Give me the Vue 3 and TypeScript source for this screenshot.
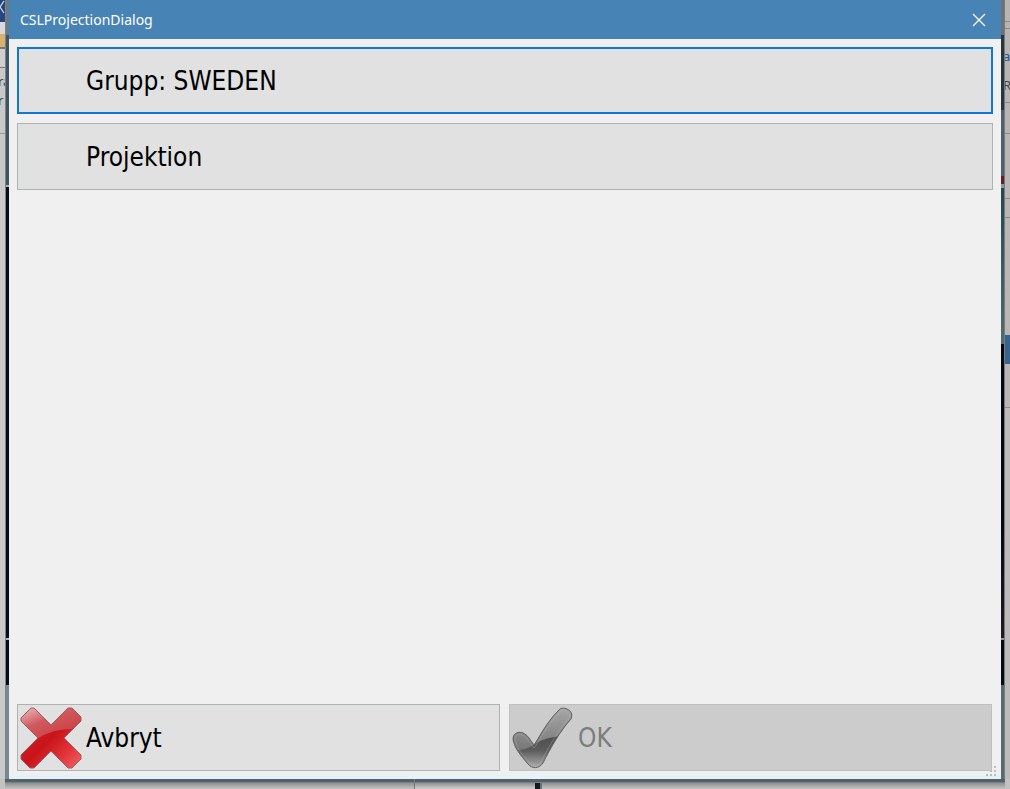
<script setup lang="ts">
import { ref } from 'vue'

const title = 'CSLProjectionDialog'
const group = ref('SWEDEN')
const canConfirm = ref(false)
</script>

<template>
  <div class="desktop">
    <div class="side left" aria-hidden="true">
      <div class="outer">
        <svg class="chevron" viewBox="0 0 5 14"><path d="M4 1 L0 7 L4 13" fill="none" stroke="#dfe6f2" stroke-width="1.2" /></svg>
        <span class="scrap first">ra</span>
        <span class="scrap second">r</span>
      </div>
      <div class="inner"></div>
    </div>

    <main class="dialog" role="dialog" :aria-label="title">
      <header class="titlebar">
        <h1>{{ title }}</h1>
        <button class="close" type="button" aria-label="Stäng">
          <svg viewBox="0 0 14 14"><path d="M1 1 L13 13 M13 1 L1 13" stroke="#fff" stroke-width="1.2" fill="none" /></svg>
        </button>
      </header>

      <div class="content">
        <button class="btn focused" type="button"><span class="slot"></span><span>Grupp: {{ group }}</span></button>
        <button class="btn" type="button"><span class="slot"></span><span>Projektion</span></button>
        <div class="spacer"></div>
        <footer class="actions">
          <button class="btn" type="button">
            <span class="slot">
              <svg class="icon" viewBox="0 0 62 62">
                <defs>
                  <linearGradient id="redBase" x1="0" y1="0" x2="1" y2="1">
                    <stop offset="0" stop-color="#d92a30" />
                    <stop offset="0.5" stop-color="#c8141a" />
                    <stop offset="0.75" stop-color="#e2353a" />
                    <stop offset="1" stop-color="#f0696c" />
                  </linearGradient>
                  <linearGradient id="redGloss" x1="0" y1="0" x2="0.6" y2="1">
                    <stop offset="0" stop-color="#ecc4c5" />
                    <stop offset="0.4" stop-color="#d0595d" />
                    <stop offset="1" stop-color="#c4343a" />
                  </linearGradient>
                  <clipPath id="crossClip">
                    <path d="M11 1 H14 L31 18 L48 1 H52 L61 10 V14 L44 31 L61 48 V52 L52 61 H48 L31 44 L14 61 H10 L1 52 V48 L18 31 L1 14 V11 Z" />
                  </clipPath>
                </defs>
                <g clip-path="url(#crossClip)">
                  <rect width="62" height="62" fill="url(#redBase)" />
                  <path d="M0 0 H62 V22 Q34 20 17 32 L0 44 Z" fill="url(#redGloss)" />
                </g>
                <path d="M11 1 H14 L31 18 L48 1 H52 L61 10 V14 L44 31 L61 48 V52 L52 61 H48 L31 44 L14 61 H10 L1 52 V48 L18 31 L1 14 V11 Z" fill="none" stroke="#a8585b" stroke-width="1" stroke-linejoin="round" />
              </svg>
            </span>
            <span>Avbryt</span>
          </button>
          <button class="btn" type="button" :disabled="!canConfirm">
            <span class="slot">
              <svg class="icon" viewBox="0 0 62 62">
                <defs>
                  <linearGradient id="greyBase" x1="0" y1="0" x2="0" y2="1">
                    <stop offset="0.45" stop-color="#4c4c4c" />
                    <stop offset="0.7" stop-color="#5c5c5c" />
                    <stop offset="1" stop-color="#b4b4b4" />
                  </linearGradient>
                  <linearGradient id="greyGloss" x1="0" y1="0" x2="0" y2="1">
                    <stop offset="0" stop-color="#a8a8a8" />
                    <stop offset="1" stop-color="#777" />
                  </linearGradient>
                  <clipPath id="tickClip">
                    <path d="M1 32 C1 26 7 24 11 26 C16 28 18 33 22 38 C27 31 34 16 46 4 C49 0 52 1 55 2 C59 4 61 7 59 12 C48 24 38 42 31 56 C27 62 20 62 16 57 C8 48 2 40 1 32 Z" />
                  </clipPath>
                </defs>
                <g clip-path="url(#tickClip)">
                  <rect width="62" height="62" fill="url(#greyBase)" />
                  <path d="M0 0 H62 V30 Q38 27 23 37 Q14 43 5 43 L0 43 Z" fill="url(#greyGloss)" />
                </g>
                <path d="M1 32 C1 26 7 24 11 26 C16 28 18 33 22 38 C27 31 34 16 46 4 C49 0 52 1 55 2 C59 4 61 7 59 12 C48 24 38 42 31 56 C27 62 20 62 16 57 C8 48 2 40 1 32 Z" fill="none" stroke="#626262" stroke-width="1" />
                <path d="M3 32 C3 28 7 26 10 28 C15 30 17 35 22 41 C28 34 35 18 47 6 C49 3 52 3 54 4 C58 6 58 8 57 11 C46 23 36 41 29 55 C26 60 21 60 18 56 C9 47 4 40 3 32 Z" fill="none" stroke="#b5b5b5" stroke-width="1" opacity="0.4" />
              </svg>
            </span>
            <span>OK</span>
          </button>
        </footer>
      </div>
      <svg class="grip" viewBox="0 0 11 11" aria-hidden="true">
        <path d="M8 0h2v2h-2z M8 4h2v2h-2z M4 4h2v2h-2z M8 8h2v2h-2z M4 8h2v2h-2z M0 8h2v2h-2z" fill="#bdbdbd" />
      </svg>
    </main>

    <div class="side right" aria-hidden="true">
      <div class="inner"></div>
      <div class="outer">
        <span class="scrap link">a</span>
        <span class="scrap letter">R</span>
      </div>
    </div>

    <div class="under" aria-hidden="true"><span class="seam"></span><span class="pane"></span><span class="bar"></span></div>
  </div>
</template>

<style>
body {
  margin: 0;
}
</style>

<style scoped>
* {
  box-sizing: border-box;
}

.desktop {
  display: grid;
  grid-template-columns: 9px minmax(0, 1fr) 9px;
  grid-template-rows: minmax(0, 1fr) 10px;
  height: 100vh;
  background: #c3c2c2;
  font-family: "Noto Sans", "Open Sans", sans-serif;
}

.side {
  display: flex;
  overflow: hidden;
}

.outer {
  position: relative;
  flex: 1;
  overflow: hidden;
}

.left .outer {
  border-right: 1px solid #7e8284;
  background: linear-gradient(#26467d 0 22px, #d9d9dc 22px 34px, #d5b26d 34px 47px, #777 47px 49px, #cfcfcf 49px 67px, #777 67px 68px, #c9c9c9 68px 133px, #999 133px 134px, #c9c9c9 134px);
}

.right .outer {
  border-left: 1px solid #77797a;
  background: linear-gradient(#b9b4b4 0 21px, #8d8a8a 21px 22px, #b9b4b4 22px 28px, #8d8a8a 28px 29px, #b9b4b4 29px 102px, #8d8a8a 102px 103px, #b9b4b4 103px 133px, #8d8a8a 133px 134px, #bab6b6 134px 198px, #8d8a8a 198px 199px, #bab6b6 199px 217px, #8d8a8a 217px 218px, #bab6b6 218px 335px, #36648f 335px 364px, #bab6b6 364px 407px, #8d8a8a 407px 408px, #bcbaba 408px);
}

.inner {
  width: 3px;
}

.left .inner {
  background: linear-gradient(#68798a 0 35px, #3d5562 35px 185px, #a5b7bc 185px 187px, #020b17 187px 638px, #a5b7bc 638px 640px, #020b17 640px 685px, #768993 685px);
}

.right .inner {
  background: linear-gradient(#6c7276 0 35px, #26363e 35px 110px, #4f626c 110px 176px, #641c2a 176px 184px, #7da09f 184px 188px, #28464e 188px, #526b73 344px, #020913 344px 520px, #211b21 638px, #8a9699 638px 640px, #030a12 640px 685px, #596a74 685px);
}

.chevron {
  position: absolute;
  top: 0;
  left: 0;
  width: 5px;
  height: 14px;
}

.scrap {
  position: absolute;
  left: -2px;
  font-size: 13px;
  line-height: 16px;
  color: #444;
}

.first {
  top: 73px;
}

.second {
  top: 92px;
}

.link {
  top: 48px;
  color: #2a4f93;
}

.letter {
  top: 77px;
}

.dialog {
  position: relative;
  display: flex;
  flex-direction: column;
  min-width: 0;
  background: #f0f0f0;
  border-bottom: 4px solid #e6f1f8;
}

.titlebar {
  display: flex;
  align-items: center;
  justify-content: space-between;
  height: 39px;
  padding: 0 14px 0 11px;
  background: #4883b6;
  color: #fff;
}

h1 {
  margin: 0;
  font-size: 14px;
  line-height: 20px;
  font-weight: 400;
}

.close {
  display: flex;
  padding: 1px;
  border: 0;
  background: none;
}

.close svg {
  width: 14px;
  height: 14px;
}

.content {
  display: flex;
  flex: 1;
  flex-direction: column;
  gap: 9px;
  padding: 8px 8px 4px;
}

.btn {
  display: flex;
  align-items: center;
  gap: 4px;
  height: 67px;
  padding: 0 2px;
  border: 1px solid #adb2b5;
  background: #e1e1e1;
  color: #000;
  font-family: "DejaVu Sans Condensed", "Noto Sans", sans-serif;
  font-size: 26px;
  line-height: 36px;
  text-align: left;
}

.btn.focused {
  padding: 0 1px;
  border: 2px solid #1078d2;
}

.btn:disabled {
  border-color: #bfbfbf;
  background: #ccc;
  color: #7d7d7d;
}

.slot {
  display: flex;
  flex: none;
  width: 62px;
}

.icon {
  width: 62px;
  height: 62px;
}

.spacer {
  flex: 1;
}

.actions {
  display: grid;
  grid-template-columns: 1fr 1fr;
  gap: 9px;
  padding-right: 1px;
}

.grip {
  position: absolute;
  right: 4px;
  bottom: -2px;
  width: 11px;
  height: 11px;
}

.under {
  display: flex;
  grid-column: 1 / -1;
  margin: 0 5px;
  background: linear-gradient(#52626b 0 3px, #7b8083 3px 4px, #8f8f8f 4px, #c4c4c4);
}

.seam {
  width: 41%;
  border-right: 1px solid #777;
}

.pane {
  width: 12%;
  margin-top: 4px;
  background: linear-gradient(#909090, #d0d0d0);
}

.bar {
  width: 7px;
  margin-top: 4px;
  border-right: 2px solid #5f7480;
  background: #15191c;
}
</style>
